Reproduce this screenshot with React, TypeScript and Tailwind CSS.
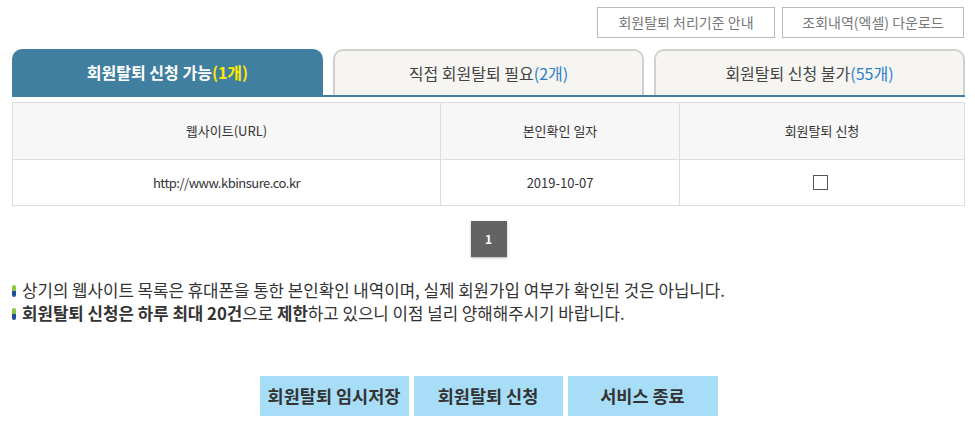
import React from 'react';

const font = { fontFamily: '"Malgun Gothic", "Noto Sans CJK KR", "Noto Sans", sans-serif' };

const Bullet = () => (
  <span className="inline-flex flex-col w-[4px] h-[12px] rounded-full overflow-hidden mr-[6px] shrink-0">
    <span className="flex-1 bg-[#8cc63f]" />
    <span className="flex-1 bg-[#1f4e9c]" />
  </span>
);

const App: React.FC = () => {
  return (
    <div className="w-[975px] h-[426px] bg-white text-[#333] overflow-hidden" style={font}>
      {/* top buttons */}
      <div className="flex justify-end gap-[7px] pt-[7px] pr-[11px]">
        <button className="w-[178px] h-[31px] border border-[#bbb] text-[14px] text-[#777] bg-white">회원탈퇴 처리기준 안내</button>
        <button className="w-[182px] h-[31px] border border-[#bbb] text-[14px] text-[#777] bg-white">조회내역(엑셀) 다운로드</button>
      </div>

      <div className="pl-[12px] pr-[10px]">
        {/* tabs */}
        <div className="flex gap-[10px] mt-[11px] border-b-2 border-[#417fa0]">
          <div className="w-[311px] shrink-0 h-[46px] rounded-t-[10px] bg-[#417fa0] text-white text-[16px] font-bold flex items-center justify-center">
            회원탈퇴 신청 가능<span className="text-[#ffea00]">(1개)</span>
          </div>
          <div className="w-[311px] shrink-0 h-[46px] rounded-t-[10px] bg-[#f6f5f2] border-2 border-b-0 border-[#d0d0d0] text-[#444] text-[16px] flex items-center justify-center">
            직접 회원탈퇴 필요<span className="text-[#2a7fc9]">(2개)</span>
          </div>
          <div className="w-[311px] shrink-0 h-[46px] rounded-t-[10px] bg-[#f6f5f2] border-2 border-b-0 border-[#d0d0d0] text-[#444] text-[16px] flex items-center justify-center">
            회원탈퇴 신청 불가<span className="text-[#2a7fc9]">(55개)</span>
          </div>
        </div>

        {/* table */}
        <table className="w-full mt-[5px] border-collapse text-[13px] text-[#333]">
          <thead>
            <tr className="bg-[#f7f7f7] h-[57px]">
              <th className="font-normal border border-[#ddd] w-[428px]">웹사이트(URL)</th>
              <th className="font-normal border border-[#ddd] w-[239px]">본인확인 일자</th>
              <th className="font-normal border border-[#ddd]">회원탈퇴 신청</th>
            </tr>
          </thead>
          <tbody>
            <tr className="h-[46px]">
              <td className="text-center border border-[#ddd] tracking-[-0.5px]">http://www.kbinsure.co.kr</td>
              <td className="text-center border border-[#ddd]">2019-10-07</td>
              <td className="border border-[#ddd]">
                <div className="flex justify-center pr-[3px]">
                  <span className="w-[15px] h-[15px] border border-[#555] bg-white" />
                </div>
              </td>
            </tr>
          </tbody>
        </table>

        {/* pagination */}
        <div className="flex justify-center mt-[15px]">
          <span className="w-[36px] h-[36px] bg-[#636363] text-white text-[12px] font-bold flex items-center justify-center shadow-[0_1px_2px_rgba(0,0,0,0.3)]">1</span>
        </div>

        {/* notes */}
        <div className="mt-[22px] text-[16.8px] text-[#333] leading-[23px]">
          <p className="flex items-center">
            <Bullet />상기의 웹사이트 목록은 휴대폰을 통한 본인확인 내역이며, 실제 회원가입 여부가 확인된 것은 아닙니다.
          </p>
          <p className="flex items-center">
            <Bullet />
            <span>
              <b>회원탈퇴 신청은 하루 최대 20건</b>으로 <b>제한</b>하고 있으니 이점 널리 양해해주시기 바랍니다.
            </span>
          </p>
        </div>

        {/* bottom buttons */}
        <div className="flex justify-center gap-[5px] mt-[51px]">
          <button className="w-[149px] h-[40px] bg-[#a8ddf7] text-[17.5px] font-bold text-[#333]">회원탈퇴 임시저장</button>
          <button className="w-[149px] h-[40px] bg-[#a8ddf7] text-[17.5px] font-bold text-[#333]">회원탈퇴 신청</button>
          <button className="w-[150px] h-[40px] bg-[#a8ddf7] text-[17.5px] font-bold text-[#333]">서비스 종료</button>
        </div>
      </div>
    </div>
  );
};

export default App;
